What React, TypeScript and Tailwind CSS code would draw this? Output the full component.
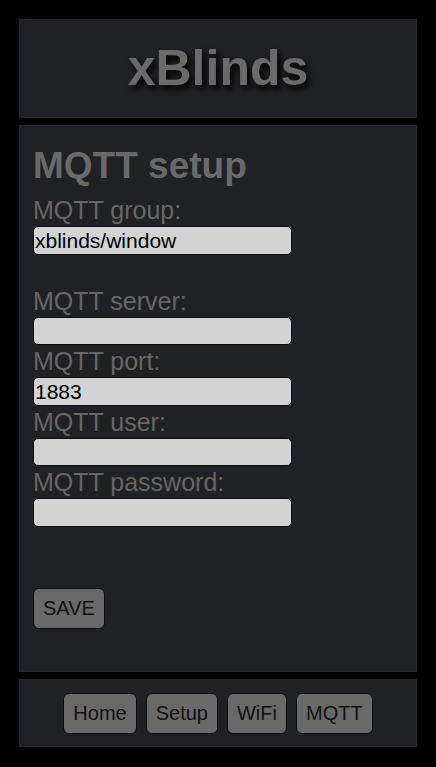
import { useState } from 'react';

const font = { fontFamily: '"Liberation Sans", Arial, sans-serif' };

interface FieldProps {
  label: string;
  value: string;
  onChange: (v: string) => void;
  type?: string;
}

function Field({ label, value, onChange, type = 'text' }: FieldProps) {
  return (
    <div className="flex flex-col">
      <label className="h-[32px] text-[25px] leading-[32px] text-[#666]">{label}</label>
      <input
        type={type}
        value={value}
        onChange={(e) => onChange(e.target.value)}
        className="h-[28.5px] w-[259px] rounded-[5px] border-[1.5px] border-[#0c0c0c] bg-[#d3d3d3] px-[1px] text-[21px] text-black outline-none"
        style={font}
      />
    </div>
  );
}

function NavButton({ children }: { children: string }) {
  return (
    <button
      className="block h-[41px] rounded-[6px] border-[1.5px] border-[#0c0c0c] bg-[#696969] px-[9px] text-[20px] text-[#111]"
      style={font}
    >
      {children}
    </button>
  );
}

export default function App() {
  const [group, setGroup] = useState('xblinds/window');
  const [server, setServer] = useState('');
  const [port, setPort] = useState('1883');
  const [user, setUser] = useState('');
  const [password, setPassword] = useState('');

  return (
    <div className="flex min-h-screen flex-col gap-[7px] bg-black p-[19px] pb-[20px]" style={font}>
      <header className="flex h-[99px] items-center justify-center border border-[#26272a] bg-[#202124]">
        <h1 className="text-[50px] font-bold text-[#6a6a6a] [text-shadow:3px_4px_6px_#000]">xBlinds</h1>
      </header>

      <main className="flex h-[547px] flex-col border border-[#26272a] bg-[#202124] px-[13px] pt-[19px]">
        <h2 className="h-[42px] text-[37px] font-bold leading-[42px] text-[#6a6a6a]">MQTT setup</h2>
        <div className="mt-[7px]">
          <Field label="MQTT group:" value={group} onChange={setGroup} />
        </div>
        <div className="mt-[30px] flex flex-col">
          <Field label="MQTT server:" value={server} onChange={setServer} />
          <Field label="MQTT port:" value={port} onChange={setPort} />
          <Field label="MQTT user:" value={user} onChange={setUser} />
          <Field label="MQTT password:" value={password} onChange={setPassword} type="password" />
        </div>
        <div className="mt-[61px]">
          <NavButton>SAVE</NavButton>
        </div>
      </main>

      <footer className="flex h-[68px] items-center justify-center gap-[9px] border border-[#26272a] bg-[#202124]">
        <NavButton>Home</NavButton>
        <NavButton>Setup</NavButton>
        <NavButton>WiFi</NavButton>
        <NavButton>MQTT</NavButton>
      </footer>
    </div>
  );
}
